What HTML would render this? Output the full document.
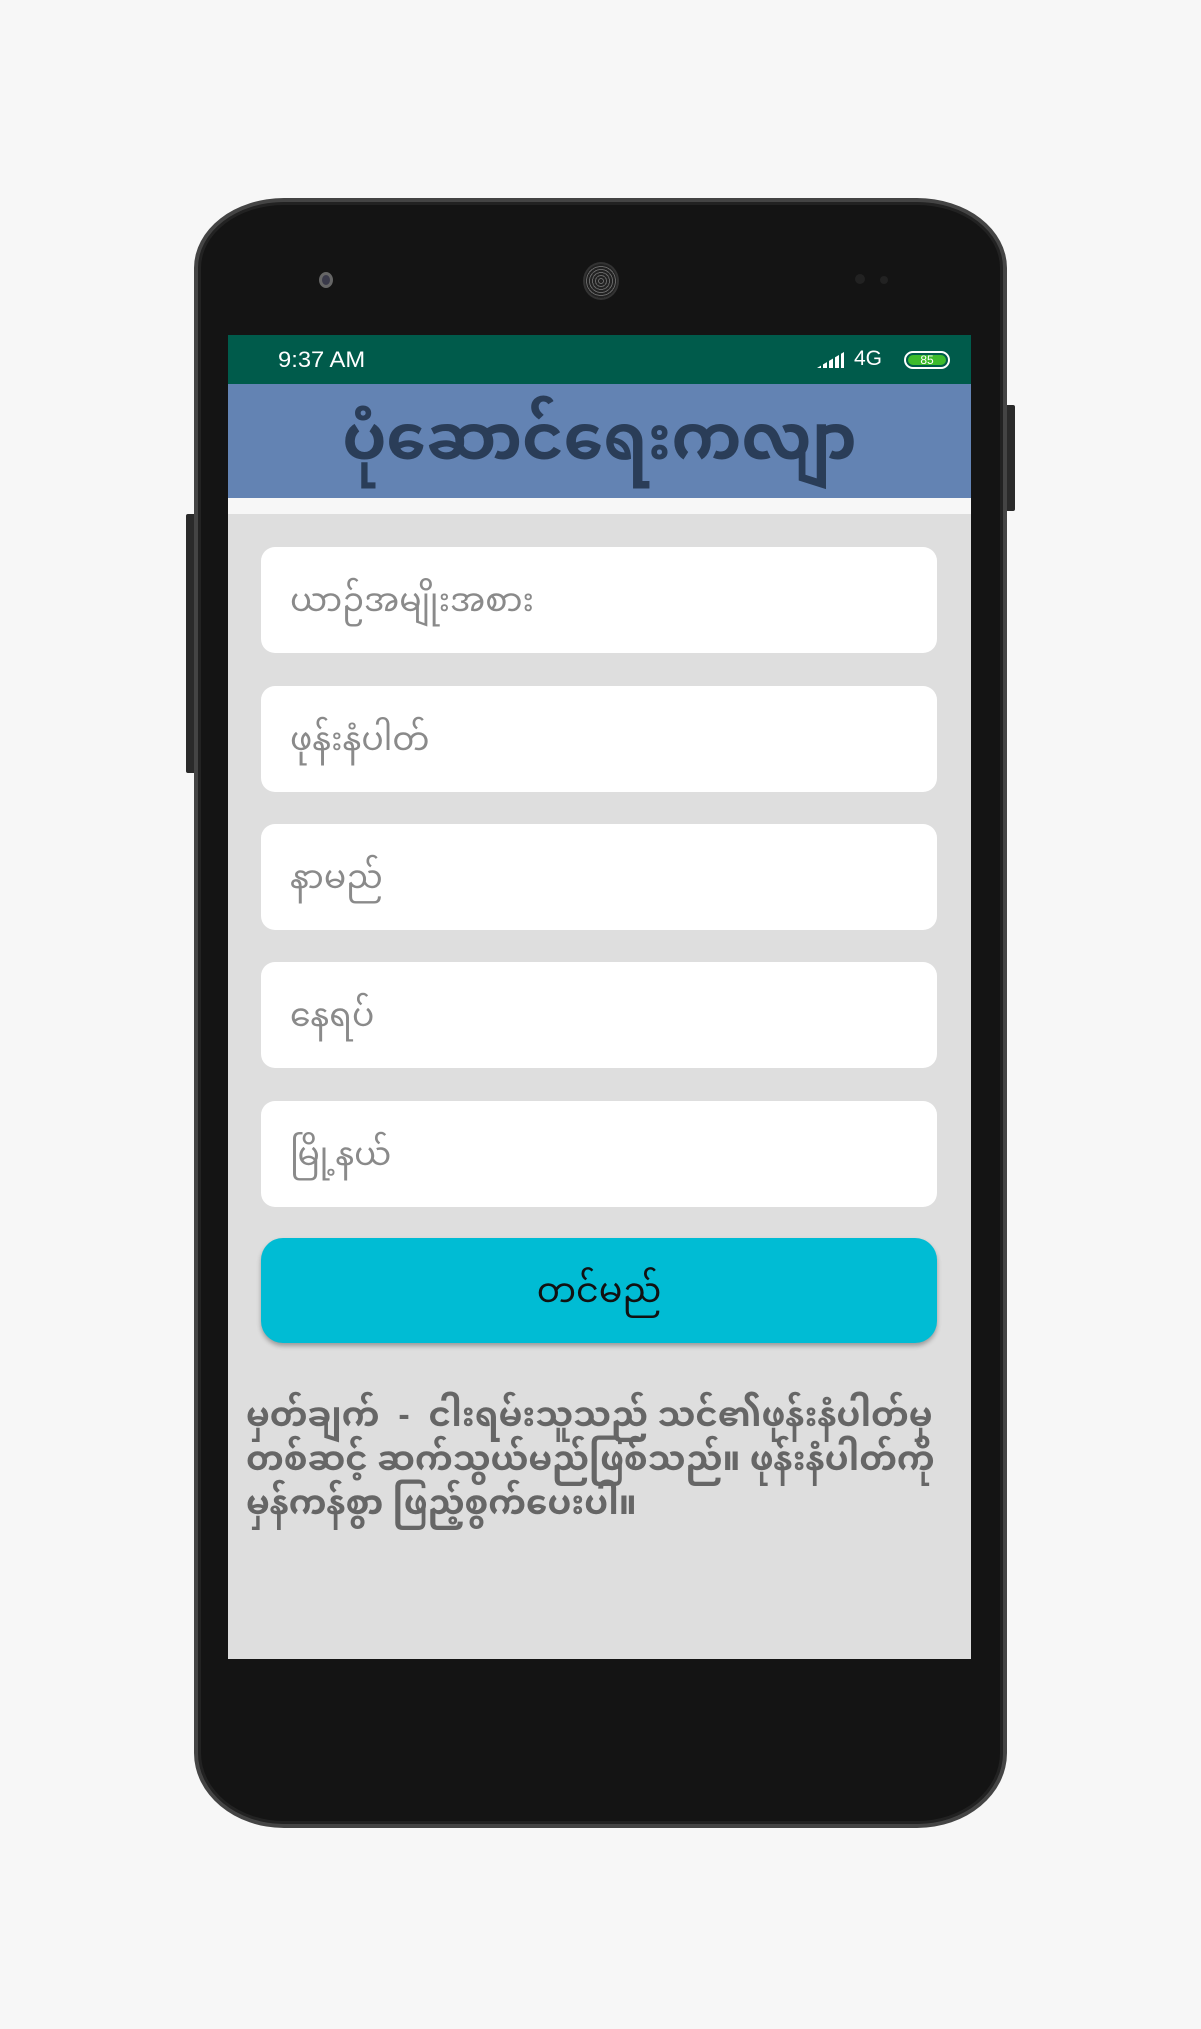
<!DOCTYPE html>
<html><head><meta charset="utf-8">
<style>
*{margin:0;padding:0;box-sizing:border-box}
html,body{width:1201px;height:2029px;background:#f7f7f7;overflow:hidden;font-family:"Liberation Sans","Noto Sans Myanmar","Padauk","Myanmar Text",sans-serif}
.abs{position:absolute}
.phone{left:194px;top:198px;width:813px;height:1630px;background:#141414;border-radius:90px 90px 90px 90px / 70px 70px 75px 75px;border:4px solid #444;box-shadow:inset 0 0 0 3px #222}
.screen{left:228px;top:335px;width:743px;height:1324px;background:#dedede}
.status{left:0;top:0;width:743px;height:49px;background:#005b4b;color:#fff}
.hdr{left:0;top:49px;width:743px;height:114px;background:#6383b3;color:#2a3d58;font-size:63px;font-weight:bold;text-align:center;line-height:108px}
.strip{left:0;top:163px;width:743px;height:16px;background:#f7f7f7}
.inp{left:33px;width:676px;height:106px;background:#fff;border-radius:14px;color:#8a8a8a;font-size:33px;line-height:106px;padding-left:29px}
.btn{left:33px;top:903px;width:676px;height:105px;background:#00bcd4;border-radius:22px;box-shadow:0 3px 5px rgba(0,0,0,.3);color:#111;font-size:35px;text-align:center;line-height:105px}
.note{left:18px;top:1058px;width:720px;color:#666;font-size:34px;font-weight:bold;line-height:44px}
</style></head><body>
<div class="abs" style="left:1005px;top:405px;width:10px;height:106px;background:#2a2a2a;border-radius:2px"></div>
<div class="abs" style="left:186px;top:514px;width:10px;height:259px;background:#2a2a2a;border-radius:2px"></div>
<div class="abs phone"></div>
<div class="abs" style="left:319px;top:272px;width:14px;height:16px;border-radius:50%;background:#3a3a4a;border:3px solid #666"></div>
<div class="abs" style="left:583px;top:262px;width:36px;height:38px;border-radius:50%;background:repeating-radial-gradient(circle,#222 0 2px,#666 2px 3px);border:2px solid #333"></div>
<div class="abs" style="left:855px;top:274px;width:10px;height:10px;border-radius:50%;background:#222"></div>
<div class="abs" style="left:880px;top:276px;width:8px;height:8px;border-radius:50%;background:#222"></div>
<div class="abs screen">
 <div class="abs status">
  <div class="abs" style="left:50px;top:12px;font-size:22px;transform:scaleX(1.08);transform-origin:left">9:37 AM</div>
  <div class="abs" style="left:589px;top:17px;width:27px;height:16px;background:repeating-linear-gradient(90deg,#fff 0 4px,transparent 4px 6px);clip-path:polygon(0 100%,100% 0,100% 100%)"></div>
  <div class="abs" style="left:626px;top:12px;font-size:21px">4G</div>
  <div class="abs" style="left:676px;top:16px;width:46px;height:18px;border:2px solid #fff;border-radius:9px;padding:2px"><div style="width:100%;height:100%;background:#3dbb2c;border-radius:5px;font-size:12px;color:#fff;text-align:center;line-height:10px">85</div></div>
 </div>
 <div class="abs hdr">ပုံဆောင်ရေးကလျာ</div>
 <div class="abs strip"></div>
 <div class="abs inp" style="top:212px">ယာဉ်အမျိုးအစား</div>
 <div class="abs inp" style="top:351px">ဖုန်းနံပါတ်</div>
 <div class="abs inp" style="top:489px">နာမည်</div>
 <div class="abs inp" style="top:627px">နေရပ်</div>
 <div class="abs inp" style="top:766px">မြို့နယ်</div>
 <div class="abs btn">တင်မည်</div>
 <div class="abs note">မှတ်ချက် &nbsp;- &nbsp;ငါးရမ်းသူသည် သင်၏ဖုန်းနံပါတ်မှ တစ်ဆင့် ဆက်သွယ်မည်ဖြစ်သည်။ ဖုန်းနံပါတ်ကို မှန်ကန်စွာ ဖြည့်စွက်ပေးပါ။</div>
</div>
</body></html>
